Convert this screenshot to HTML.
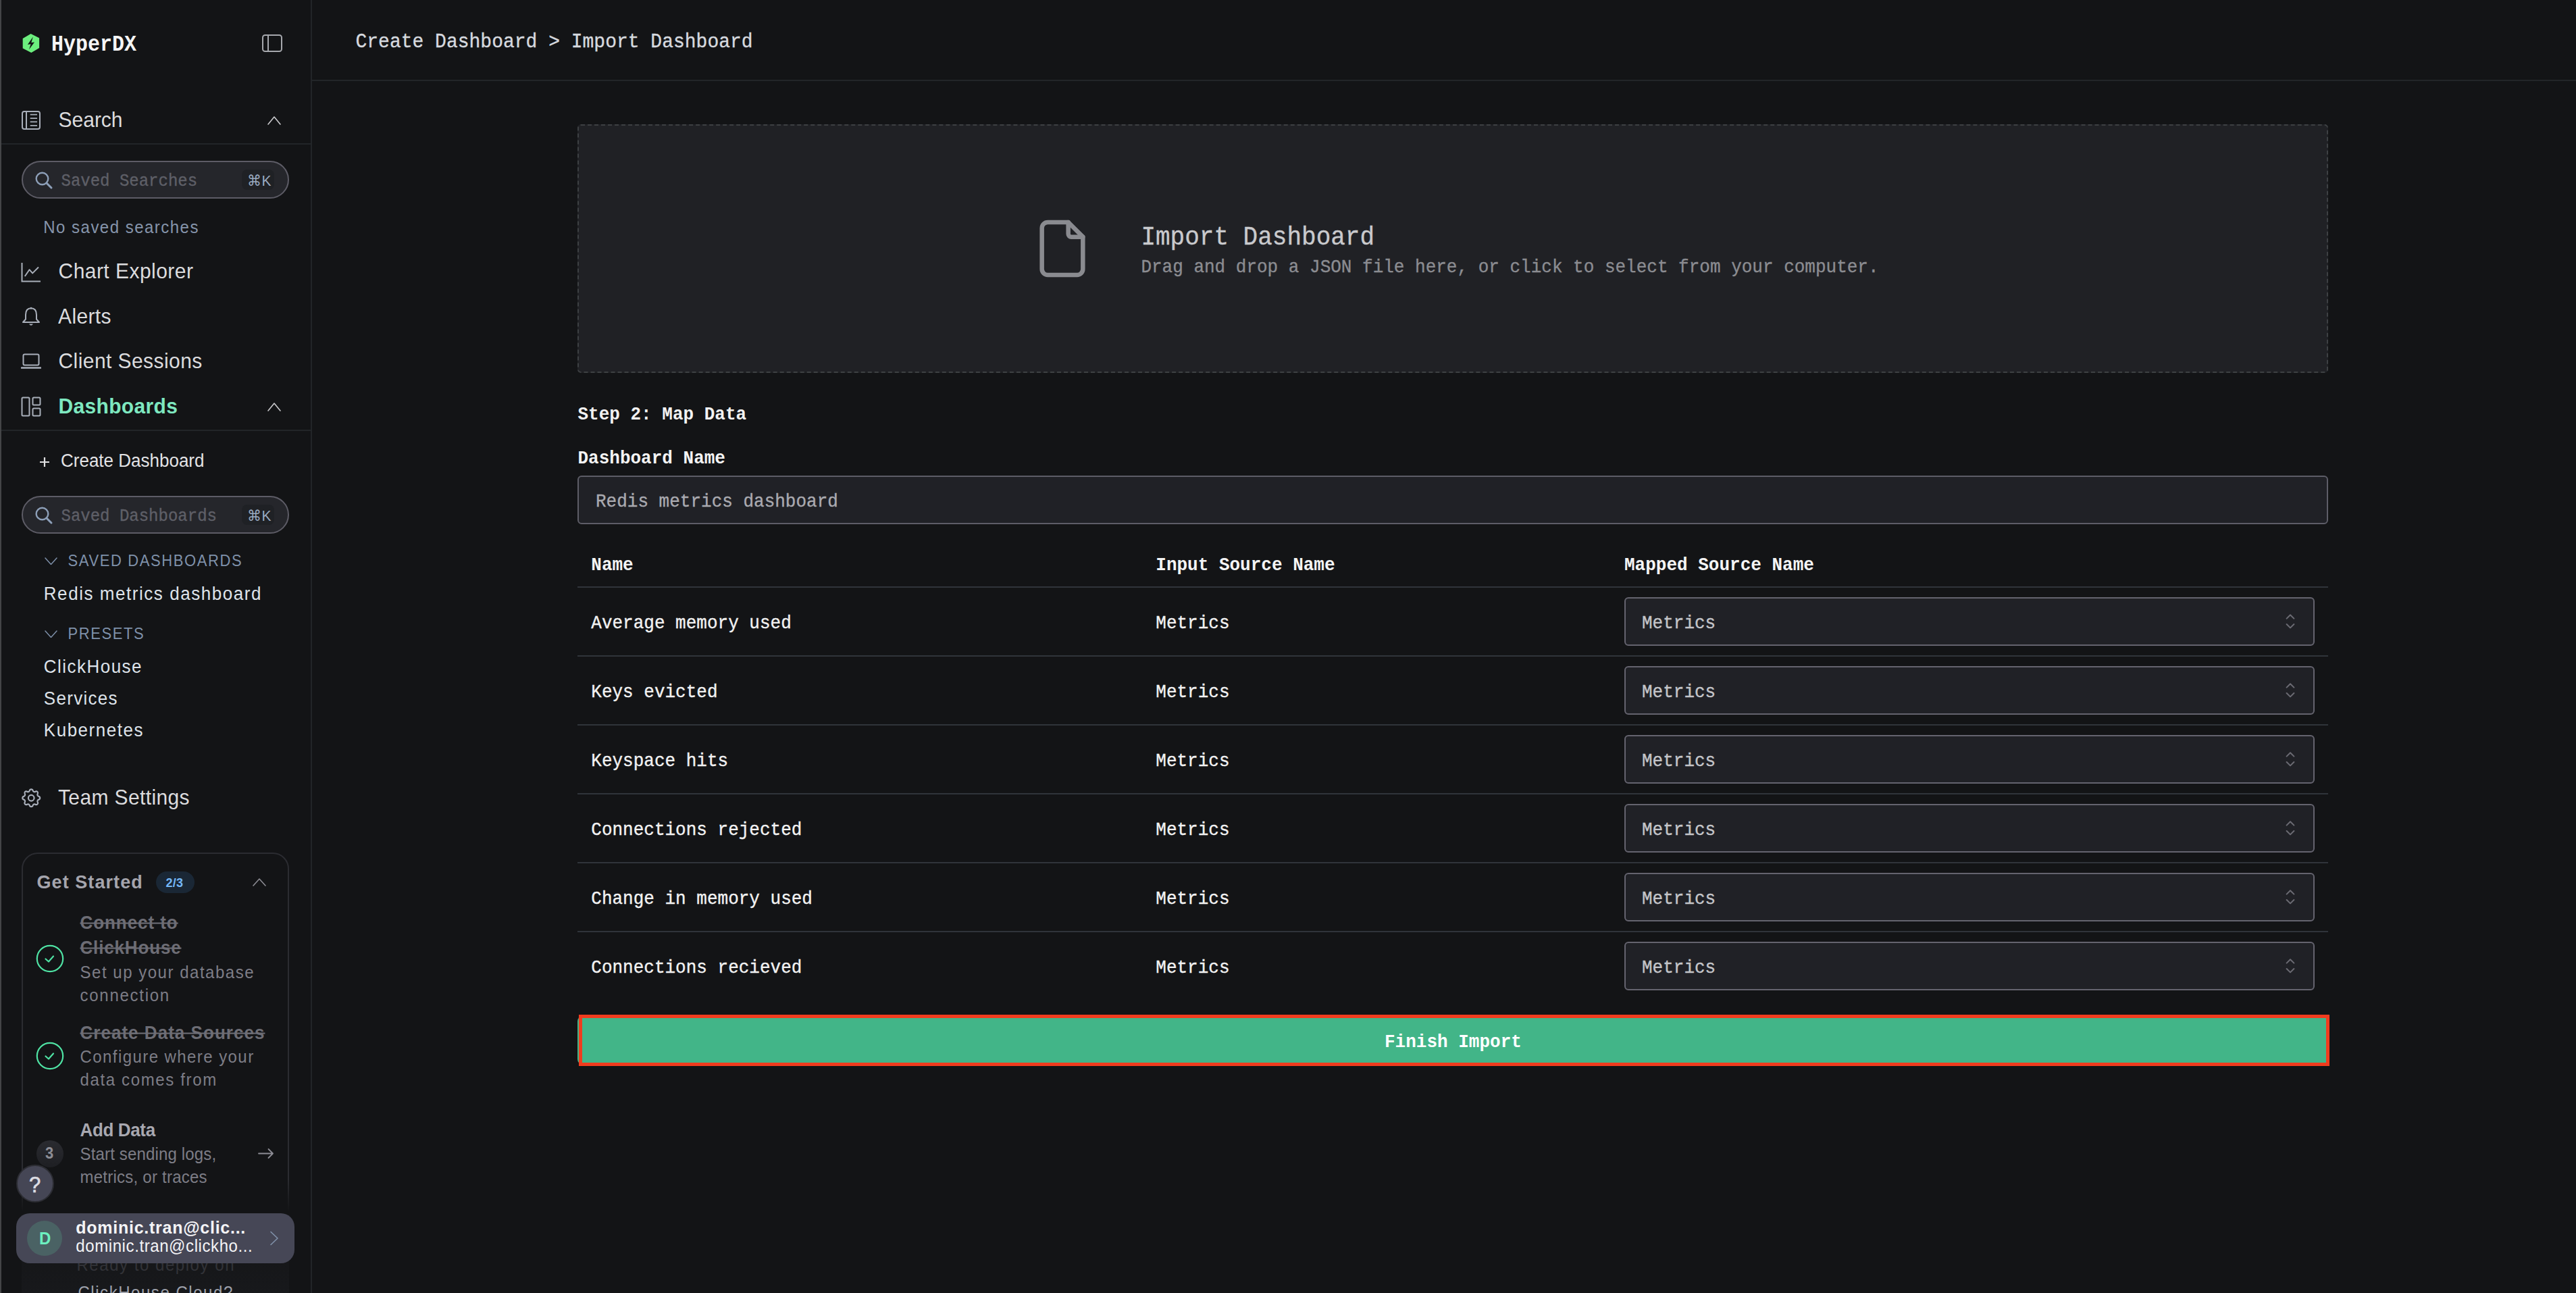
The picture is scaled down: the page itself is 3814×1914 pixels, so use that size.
<!DOCTYPE html>
<html><head><meta charset="utf-8"><style>
html,body{margin:0;padding:0;}
body{width:3814px;height:1914px;overflow:hidden;background:#131416;position:relative;}
.t{position:absolute;white-space:nowrap;}
.s{font-family:"Liberation Sans", sans-serif;}
.m{font-family:"Liberation Mono", monospace;}
.b{position:absolute;display:block;}
</style></head><body>
<div class="b" style="left:0px;top:0px;width:2px;height:1914px;background:#444547;"></div>
<div class="b" style="left:460px;top:0px;width:2px;height:1914px;background:#222528;"></div>
<svg class="b" style="left:32px;top:49px;" width="28" height="30" viewBox="0 0 28 30" fill="none"><path d="M13.6 0.9 L26.1 7.3 V21.9 L14.3 29.1 L1.7 22.6 V8 Z" fill="#6cee7e"/><path d="M16.9 5.4 L8.9 16.9 L13.6 16.3 L11 24.3 L19 13.5 L14.4 14.1 Z" fill="#131416"/></svg>
<div class="t m " style="left:76px;top:48.52px;font-size:30px;line-height:36px;color:#f5f5f5;font-weight:700;transform:scaleY(1.08);transform-origin:0 25.98px;">HyperDX</div>
<svg class="b" style="left:388px;top:51px;" width="30" height="26" viewBox="0 0 30 26" fill="none"><rect x="1" y="1" width="28" height="24" rx="3.5" stroke="#a6a8ad" stroke-width="2"/><line x1="9" y1="1.5" x2="9" y2="24.5" stroke="#a6a8ad" stroke-width="2"/></svg>
<svg class="b" style="left:32px;top:164px;" width="28" height="28" viewBox="0 0 28 28" fill="none"><rect x="1" y="1" width="26" height="26" rx="3" stroke="#a9afba" stroke-width="2"/><line x1="7" y1="1.5" x2="7" y2="26.5" stroke="#a9afba" stroke-width="2"/><path d="M12.7 5.6 H23 M12.7 11.1 H23 M12.7 16.4 H23 M12.7 21.8 H23" stroke="#a9afba" stroke-width="1.8"/></svg>
<div class="t s " style="left:86.5px;top:159.60px;font-size:30px;line-height:36px;color:#dcdcde;font-weight:400;transform:scaleY(1.05);transform-origin:0 28.40px;">Search</div>
<svg class="b" style="left:396px;top:171.5px;" width="20" height="13" viewBox="0 0 20 13" fill="none"><path d="M1 12 L10.0 1 L19 12" stroke="#c9c9cc" stroke-width="1.6" stroke-linecap="round" stroke-linejoin="round"/></svg>
<div class="b" style="left:2px;top:212px;width:458px;height:2px;background:#222528;"></div>
<div class="b" style="left:32px;top:238px;width:396px;height:56px;background:#25262b;border:2px solid #5d5c66;border-radius:28px;box-sizing:border-box;"></div>
<svg class="b" style="left:50px;top:252px;" width="30" height="30" viewBox="0 0 30 30" fill="none"><circle cx="12.5" cy="12.5" r="8.8" stroke="#8d9fb8" stroke-width="2.4"/><path d="M19 19 L26 26" stroke="#8d9fb8" stroke-width="3" stroke-linecap="round"/></svg>
<div class="t m " style="left:90.5px;top:254.11px;font-size:24px;line-height:29px;color:#5e5f67;font-weight:400;transform:scaleY(1.08);transform-origin:0 20.89px;-webkit-text-stroke:0.35px #5e5f67;">Saved Searches</div>
<div class="b" style="left:358px;top:251px;width:48px;height:30px;background:#1f2125;border-radius:8px;"></div>
<div class="t s " style="left:366px;top:254.62px;font-size:21px;line-height:25px;color:#9aaac0;font-weight:400;transform:scaleY(1.05);transform-origin:0 19.78px;letter-spacing:0.6px;">&#8984;K</div>
<div class="t s " style="left:64.3px;top:321.98px;font-size:24px;line-height:29px;color:#8695ab;font-weight:400;transform:scaleY(1.05);transform-origin:0 22.82px;letter-spacing:1.48px;">No saved searches</div>
<svg class="b" style="left:31px;top:388px;" width="30" height="30" viewBox="0 0 30 30" fill="none"><path d="M1.5 1 V28.5 H29" stroke="#a9afba" stroke-width="2"/><path d="M5.8 21 L12.5 11.2 L17.2 16.4 L26 7.5" stroke="#a9afba" stroke-width="2" stroke-linejoin="round"/></svg>
<div class="t s " style="left:86.5px;top:384.41px;font-size:30px;line-height:36px;color:#dcdcde;font-weight:400;transform:scaleY(1.05);transform-origin:0 28.40px;letter-spacing:0.46px;">Chart Explorer</div>
<svg class="b" style="left:32px;top:454px;" width="28" height="30" viewBox="0 0 28 30" fill="none"><path d="M14 2.2 C8 2.2 6 7 6 12 V18.5 L2 23 H26 L22 18.5 V12 C22 7 20 2.2 14 2.2 Z" stroke="#a9afba" stroke-width="2" stroke-linejoin="round"/><path d="M11 25.5 Q14 30 17 25.5 Z" fill="#a9afba"/><circle cx="14" cy="2.2" r="1.4" fill="#a9afba"/></svg>
<div class="t s " style="left:86px;top:450.61px;font-size:30px;line-height:36px;color:#dcdcde;font-weight:400;transform:scaleY(1.05);transform-origin:0 28.40px;letter-spacing:0.38px;">Alerts</div>
<svg class="b" style="left:31px;top:523px;" width="30" height="24" viewBox="0 0 30 24" fill="none"><rect x="3.5" y="1.5" width="23" height="16" rx="2" stroke="#a9afba" stroke-width="2"/><path d="M1 21.5 H29" stroke="#a9afba" stroke-width="2.6" stroke-linecap="round"/></svg>
<div class="t s " style="left:86.5px;top:516.90px;font-size:30px;line-height:36px;color:#dcdcde;font-weight:400;transform:scaleY(1.05);transform-origin:0 28.40px;letter-spacing:0.43px;">Client Sessions</div>
<svg class="b" style="left:31px;top:587px;" width="30" height="30" viewBox="0 0 30 30" fill="none"><rect x="1.5" y="1.5" width="11" height="27" rx="1.5" stroke="#a9afba" stroke-width="2"/><rect x="17.5" y="1.5" width="11" height="11" rx="1.5" stroke="#a9afba" stroke-width="2"/><rect x="17.5" y="17.5" width="11" height="11" rx="1.5" stroke="#a9afba" stroke-width="2"/></svg>
<div class="t s " style="left:86.5px;top:584.00px;font-size:30px;line-height:36px;color:#7ee8c0;font-weight:700;transform:scaleY(1.05);transform-origin:0 28.40px;letter-spacing:0.33px;">Dashboards</div>
<svg class="b" style="left:396px;top:596px;" width="20" height="13" viewBox="0 0 20 13" fill="none"><path d="M1 12 L10.0 1 L19 12" stroke="#c9c9cc" stroke-width="1.6" stroke-linecap="round" stroke-linejoin="round"/></svg>
<div class="b" style="left:2px;top:636px;width:458px;height:2px;background:#222528;"></div>
<svg class="b" style="left:58px;top:676px;" width="16" height="16" viewBox="0 0 16 16" fill="none"><path d="M8 1 V15 M1 8 H15" stroke="#e0e0e2" stroke-width="2.2"/></svg>
<div class="t s " style="left:90px;top:666.79px;font-size:26px;line-height:31px;color:#e2e2e4;font-weight:400;transform:scaleY(1.05);transform-origin:0 24.51px;">Create Dashboard</div>
<div class="b" style="left:32px;top:734px;width:396px;height:56px;background:#25262b;border:2px solid #5d5c66;border-radius:28px;box-sizing:border-box;"></div>
<svg class="b" style="left:50px;top:748px;" width="30" height="30" viewBox="0 0 30 30" fill="none"><circle cx="12.5" cy="12.5" r="8.8" stroke="#8d9fb8" stroke-width="2.4"/><path d="M19 19 L26 26" stroke="#8d9fb8" stroke-width="3" stroke-linecap="round"/></svg>
<div class="t m " style="left:90.5px;top:750.11px;font-size:24px;line-height:29px;color:#5e5f67;font-weight:400;transform:scaleY(1.08);transform-origin:0 20.89px;-webkit-text-stroke:0.35px #5e5f67;">Saved Dashboards</div>
<div class="b" style="left:358px;top:747px;width:48px;height:30px;background:#1f2125;border-radius:8px;"></div>
<div class="t s " style="left:366px;top:750.62px;font-size:21px;line-height:25px;color:#9aaac0;font-weight:400;transform:scaleY(1.05);transform-origin:0 19.78px;letter-spacing:0.6px;">&#8984;K</div>
<svg class="b" style="left:65.5px;top:824.5px;" width="19" height="11.5" viewBox="0 0 19 11.5" fill="none"><path d="M1 1 L9.5 10.5 L18 1" stroke="#7d8fa8" stroke-width="1.5" stroke-linecap="round" stroke-linejoin="round"/></svg>
<div class="t s " style="left:100.5px;top:818.38px;font-size:22px;line-height:26px;color:#7f91aa;font-weight:400;transform:scaleY(1.05);transform-origin:0 20.62px;letter-spacing:1.6px;">SAVED DASHBOARDS</div>
<div class="t s " style="left:64.8px;top:863.69px;font-size:26px;line-height:31px;color:#dee3ea;font-weight:400;transform:scaleY(1.05);transform-origin:0 24.51px;letter-spacing:1.55px;">Redis metrics dashboard</div>
<svg class="b" style="left:65.5px;top:932.5px;" width="19" height="11.5" viewBox="0 0 19 11.5" fill="none"><path d="M1 1 L9.5 10.5 L18 1" stroke="#7d8fa8" stroke-width="1.5" stroke-linecap="round" stroke-linejoin="round"/></svg>
<div class="t s " style="left:100.5px;top:926.38px;font-size:22px;line-height:26px;color:#7f91aa;font-weight:400;transform:scaleY(1.05);transform-origin:0 20.62px;letter-spacing:1.6px;">PRESETS</div>
<div class="t s " style="left:64.8px;top:972.19px;font-size:26px;line-height:31px;color:#dee3ea;font-weight:400;transform:scaleY(1.05);transform-origin:0 24.51px;letter-spacing:1.47px;">ClickHouse</div>
<div class="t s " style="left:64.8px;top:1019.29px;font-size:26px;line-height:31px;color:#dee3ea;font-weight:400;transform:scaleY(1.05);transform-origin:0 24.51px;letter-spacing:1.3px;">Services</div>
<div class="t s " style="left:64.8px;top:1066.29px;font-size:26px;line-height:31px;color:#dee3ea;font-weight:400;transform:scaleY(1.05);transform-origin:0 24.51px;letter-spacing:1.52px;">Kubernetes</div>
<svg class="b" style="left:28.8px;top:1163.5px;stroke:#a9afba;stroke-width:1.5;stroke-linecap:round;stroke-linejoin:round;" width="34.5" height="34.5" viewBox="0 0 24 24" fill="none"><path d="M10.325 4.317c.426 -1.756 2.924 -1.756 3.35 0a1.724 1.724 0 0 0 2.573 1.066c1.543 -.94 3.31 .826 2.37 2.37a1.724 1.724 0 0 0 1.065 2.572c1.756 .426 1.756 2.924 0 3.35a1.724 1.724 0 0 0 -1.066 2.573c.94 1.543 -.826 3.31 -2.37 2.37a1.724 1.724 0 0 0 -2.572 1.065c-.426 1.756 -2.924 1.756 -3.35 0a1.724 1.724 0 0 0 -2.573 -1.066c-1.543 .94 -3.31 -.826 -2.37 -2.37a1.724 1.724 0 0 0 -1.065 -2.572c-1.756 -.426 -1.756 -2.924 0 -3.35a1.724 1.724 0 0 0 1.066 -2.573c-.94 -1.543 .826 -3.31 2.37 -2.37c1 .608 2.296 .07 2.572 -1.065z"/><circle cx="12" cy="12" r="3"/></svg>
<div class="t s " style="left:86px;top:1162.90px;font-size:30px;line-height:36px;color:#dcdcde;font-weight:400;transform:scaleY(1.05);transform-origin:0 28.40px;letter-spacing:0.37px;">Team Settings</div>
<div class="b" style="left:32px;top:1262px;width:396px;height:700px;border:2px solid #2b2c31;border-radius:24px;box-sizing:border-box;background:#131416;"></div>
<div class="b" style="left:28px;top:1745px;width:10px;height:60px;background:linear-gradient(rgba(19,20,22,0),#131416 80%);"></div>
<div class="b" style="left:422px;top:1745px;width:10px;height:60px;background:linear-gradient(rgba(19,20,22,0),#131416 80%);"></div>
<div class="b" style="left:32px;top:1805px;width:396px;height:120px;background:linear-gradient(#131416,#18191c);"></div>
<div class="t s " style="left:54.5px;top:1289.84px;font-size:27px;line-height:32px;color:#a5a5ad;font-weight:700;transform:scaleY(1.05);transform-origin:0 25.36px;letter-spacing:1.07px;">Get Started</div>
<div class="b" style="left:231px;top:1290px;width:57px;height:32px;background:#1a2735;border-radius:16px;"></div>
<div class="t s " style="left:245.5px;top:1295.56px;font-size:18px;line-height:22px;color:#74b8f8;font-weight:700;transform:scaleY(1.05);transform-origin:0 17.24px;letter-spacing:0.3px;">2/3</div>
<svg class="b" style="left:374px;top:1300px;" width="20" height="12" viewBox="0 0 20 12" fill="none"><path d="M1 11 L10.0 1 L19 11" stroke="#8c8c94" stroke-width="1.6" stroke-linecap="round" stroke-linejoin="round"/></svg>
<svg class="b" style="left:53px;top:1398px;" width="42" height="42" viewBox="0 0 42 42" fill="none"><circle cx="21" cy="21" r="19.2" stroke="#4fe3a4" stroke-width="2.2"/><path d="M14.5 21.5 L19 25.5 L26 17.5" stroke="#4fe3a4" stroke-width="2.2" stroke-linecap="round" stroke-linejoin="round"/></svg>
<div class="t s " style="left:118.5px;top:1350.99px;font-size:26px;line-height:31px;color:#6d6d75;font-weight:700;transform:scaleY(1.05);transform-origin:0 24.51px;letter-spacing:0.94px;text-decoration:line-through;text-decoration-thickness:2px;">Connect to</div>
<div class="t s " style="left:118.5px;top:1388.49px;font-size:26px;line-height:31px;color:#6d6d75;font-weight:700;transform:scaleY(1.05);transform-origin:0 24.51px;letter-spacing:0.84px;text-decoration:line-through;text-decoration-thickness:2px;">ClickHouse</div>
<div class="t s " style="left:118.5px;top:1424.98px;font-size:24px;line-height:29px;color:#7d7d86;font-weight:400;transform:scaleY(1.05);transform-origin:0 22.82px;letter-spacing:1.52px;">Set up your database</div>
<div class="t s " style="left:118.5px;top:1458.88px;font-size:24px;line-height:29px;color:#7d7d86;font-weight:400;transform:scaleY(1.05);transform-origin:0 22.82px;letter-spacing:1.73px;">connection</div>
<svg class="b" style="left:53px;top:1542px;" width="42" height="42" viewBox="0 0 42 42" fill="none"><circle cx="21" cy="21" r="19.2" stroke="#4fe3a4" stroke-width="2.2"/><path d="M14.5 21.5 L19 25.5 L26 17.5" stroke="#4fe3a4" stroke-width="2.2" stroke-linecap="round" stroke-linejoin="round"/></svg>
<div class="t s " style="left:118.5px;top:1514.49px;font-size:26px;line-height:31px;color:#6d6d75;font-weight:700;transform:scaleY(1.05);transform-origin:0 24.51px;letter-spacing:1.03px;text-decoration:line-through;text-decoration-thickness:2px;">Create Data Sources</div>
<div class="t s " style="left:118.5px;top:1549.88px;font-size:24px;line-height:29px;color:#7d7d86;font-weight:400;transform:scaleY(1.05);transform-origin:0 22.82px;letter-spacing:1.43px;">Configure where your</div>
<div class="t s " style="left:118.5px;top:1583.78px;font-size:24px;line-height:29px;color:#7d7d86;font-weight:400;transform:scaleY(1.05);transform-origin:0 22.82px;letter-spacing:1.64px;">data comes from</div>
<div class="t s " style="left:118.5px;top:1658.49px;font-size:26px;line-height:31px;color:#a8a8b0;font-weight:700;transform:scaleY(1.05);transform-origin:0 24.51px;letter-spacing:-0.36px;">Add Data</div>
<div class="b" style="left:54px;top:1688px;width:40px;height:40px;background:linear-gradient(#2a2b30,#1e1f23);border-radius:20px;"></div>
<div class="t s " style="left:67px;top:1695.38px;font-size:22px;line-height:26px;color:#8d8d95;font-weight:700;transform:scaleY(1.05);transform-origin:0 20.62px;">3</div>
<div class="t s " style="left:118.5px;top:1694.18px;font-size:24px;line-height:29px;color:#7d7d86;font-weight:400;transform:scaleY(1.05);transform-origin:0 22.82px;letter-spacing:0.16px;">Start sending logs,</div>
<div class="t s " style="left:118.5px;top:1728.48px;font-size:24px;line-height:29px;color:#7d7d86;font-weight:400;transform:scaleY(1.05);transform-origin:0 22.82px;letter-spacing:0.24px;">metrics, or traces</div>
<svg class="b" style="left:382px;top:1699px;" width="24" height="17" viewBox="0 0 24 17" fill="none"><path d="M1 8.5 H22 M15.5 2 L22 8.5 L15.5 15" stroke="#8d8d95" stroke-width="1.8" stroke-linecap="round" stroke-linejoin="round"/></svg>
<div class="t s " style="left:113.5px;top:1858.18px;font-size:24px;line-height:29px;color:#323338;font-weight:400;transform:scaleY(1.05);transform-origin:0 22.82px;letter-spacing:1.54px;">Ready to deploy on</div>
<div class="t s " style="left:115.5px;top:1899.18px;font-size:24px;line-height:29px;color:#9ea1ab;font-weight:400;transform:scaleY(1.05);transform-origin:0 22.82px;letter-spacing:1.54px;">ClickHouse Cloud?</div>
<div class="b" style="left:24px;top:1724px;width:56px;height:56px;background:#454655;border:2px solid #2c2d33;border-radius:50%;box-sizing:border-box;"></div>
<div class="t s " style="left:43px;top:1735.76px;font-size:31px;line-height:37px;color:#dcdce2;font-weight:400;transform:scaleY(1.05);transform-origin:0 29.24px;-webkit-text-stroke:0.7px #dcdce2;">?</div>
<div class="b" style="left:24px;top:1796px;width:412px;height:74px;background:#464756;border-radius:20px;"></div>
<div class="b" style="left:40px;top:1807px;width:52px;height:52px;background:#4a6264;border-radius:50%;"></div>
<div class="t s " style="left:58px;top:1819.18px;font-size:24px;line-height:29px;color:#6cf0c0;font-weight:700;transform:scaleY(1.05);transform-origin:0 22.82px;">D</div>
<div class="t s " style="left:112.3px;top:1802.34px;font-size:25px;line-height:30px;color:#f4f4f6;font-weight:700;transform:scaleY(1.05);transform-origin:0 23.66px;letter-spacing:0.74px;">dominic.tran@clic...</div>
<div class="t s " style="left:112.3px;top:1830.18px;font-size:24px;line-height:29px;color:#f4f4f6;font-weight:400;transform:scaleY(1.05);transform-origin:0 22.82px;letter-spacing:0.59px;">dominic.tran@clickho...</div>
<svg class="b" style="left:399px;top:1822px;" width="14" height="22" viewBox="0 0 14 22" fill="none"><path d="M2 1.5 L12 11 L2 20.5" stroke="#8192aa" stroke-width="1.6" stroke-linecap="round" stroke-linejoin="round"/></svg>
<div class="b" style="left:462px;top:118px;width:3352px;height:2px;background:#222528;"></div>
<div class="t m " style="left:526.5px;top:45.55px;font-size:28px;line-height:34px;color:#d6d9df;font-weight:400;transform:scaleY(1.08);transform-origin:0 24.45px;-webkit-text-stroke:0.35px #d6d9df;">Create Dashboard &gt; Import Dashboard</div>
<div class="b" style="left:855px;top:184px;width:2592px;height:368px;background:#202125;border:2px dashed #3d4043;border-radius:5px;box-sizing:border-box;"></div>
<svg class="b" style="left:1521px;top:316px;stroke:#8a8b90;stroke-width:1.5;stroke-linecap:round;stroke-linejoin:round;" width="104" height="104" viewBox="0 0 24 24" fill="none"><path d="M14 3v4a1 1 0 0 0 1 1h4" /><path d="M17 21h-10a2 2 0 0 1 -2 -2v-14a2 2 0 0 1 2 -2h7l5 5v11a2 2 0 0 1 -2 2z" /></svg>
<div class="t m " style="left:1689.4px;top:330.92px;font-size:36px;line-height:43px;color:#c9cacd;font-weight:400;transform:scaleY(1.08);transform-origin:0 31.08px;-webkit-text-stroke:0.35px #c9cacd;">Import Dashboard</div>
<div class="t m " style="left:1689.4px;top:381.38px;font-size:26px;line-height:31px;color:#8b8c91;font-weight:400;transform:scaleY(1.08);transform-origin:0 22.42px;-webkit-text-stroke:0.35px #8b8c91;">Drag and drop a JSON file here, or click to select from your computer.</div>
<div class="t m " style="left:855.5px;top:598.58px;font-size:26px;line-height:31px;color:#f2f2f2;font-weight:700;transform:scaleY(1.08);transform-origin:0 22.42px;">Step 2: Map Data</div>
<div class="t m " style="left:855.5px;top:664.08px;font-size:26px;line-height:31px;color:#f4f4f4;font-weight:700;transform:scaleY(1.08);transform-origin:0 22.42px;">Dashboard Name</div>
<div class="b" style="left:855px;top:704px;width:2592px;height:72px;background:#202126;border:2px solid #5d5d67;border-radius:6px;box-sizing:border-box;"></div>
<div class="t m " style="left:882px;top:727.58px;font-size:26px;line-height:31px;color:#aaaab0;font-weight:400;transform:scaleY(1.08);transform-origin:0 22.42px;-webkit-text-stroke:0.35px #aaaab0;">Redis metrics dashboard</div>
<div class="t m " style="left:875.3px;top:821.58px;font-size:26px;line-height:31px;color:#f4f4f4;font-weight:700;transform:scaleY(1.08);transform-origin:0 22.42px;">Name</div>
<div class="t m " style="left:1711.3px;top:821.58px;font-size:26px;line-height:31px;color:#f4f4f4;font-weight:700;transform:scaleY(1.08);transform-origin:0 22.42px;">Input Source Name</div>
<div class="t m " style="left:2405px;top:821.58px;font-size:26px;line-height:31px;color:#f4f4f4;font-weight:700;transform:scaleY(1.08);transform-origin:0 22.42px;">Mapped Source Name</div>
<div class="b" style="left:855px;top:868px;width:2592px;height:2px;background:#30343a;"></div>
<div class="t m " style="left:875.3px;top:907.58px;font-size:26px;line-height:31px;color:#f2f2f2;font-weight:400;transform:scaleY(1.08);transform-origin:0 22.42px;-webkit-text-stroke:0.35px #f2f2f2;">Average memory used</div>
<div class="t m " style="left:1711.3px;top:907.58px;font-size:26px;line-height:31px;color:#f2f2f2;font-weight:400;transform:scaleY(1.08);transform-origin:0 22.42px;-webkit-text-stroke:0.35px #f2f2f2;">Metrics</div>
<div class="b" style="left:2405px;top:884px;width:1022px;height:72px;background:#202126;border:2px solid #64636e;border-radius:6px;box-sizing:border-box;"></div>
<div class="t m " style="left:2431px;top:907.58px;font-size:26px;line-height:31px;color:#c4c5c9;font-weight:400;transform:scaleY(1.08);transform-origin:0 22.42px;-webkit-text-stroke:0.35px #c4c5c9;">Metrics</div>
<svg class="b" style="left:3382px;top:907px;" width="18" height="26" viewBox="0 0 18 26" fill="none"><path d="M3.6 8.6 L9 3.2 L14.4 8.6 M3.6 17 L9 22.4 L14.4 17" stroke="#6b6b73" stroke-width="2" stroke-linecap="round" stroke-linejoin="round"/></svg>
<div class="b" style="left:855px;top:970px;width:2592px;height:2px;background:#30343a;"></div>
<div class="t m " style="left:875.3px;top:1009.58px;font-size:26px;line-height:31px;color:#f2f2f2;font-weight:400;transform:scaleY(1.08);transform-origin:0 22.42px;-webkit-text-stroke:0.35px #f2f2f2;">Keys evicted</div>
<div class="t m " style="left:1711.3px;top:1009.58px;font-size:26px;line-height:31px;color:#f2f2f2;font-weight:400;transform:scaleY(1.08);transform-origin:0 22.42px;-webkit-text-stroke:0.35px #f2f2f2;">Metrics</div>
<div class="b" style="left:2405px;top:986px;width:1022px;height:72px;background:#202126;border:2px solid #64636e;border-radius:6px;box-sizing:border-box;"></div>
<div class="t m " style="left:2431px;top:1009.58px;font-size:26px;line-height:31px;color:#c4c5c9;font-weight:400;transform:scaleY(1.08);transform-origin:0 22.42px;-webkit-text-stroke:0.35px #c4c5c9;">Metrics</div>
<svg class="b" style="left:3382px;top:1009px;" width="18" height="26" viewBox="0 0 18 26" fill="none"><path d="M3.6 8.6 L9 3.2 L14.4 8.6 M3.6 17 L9 22.4 L14.4 17" stroke="#6b6b73" stroke-width="2" stroke-linecap="round" stroke-linejoin="round"/></svg>
<div class="b" style="left:855px;top:1072px;width:2592px;height:2px;background:#30343a;"></div>
<div class="t m " style="left:875.3px;top:1111.58px;font-size:26px;line-height:31px;color:#f2f2f2;font-weight:400;transform:scaleY(1.08);transform-origin:0 22.42px;-webkit-text-stroke:0.35px #f2f2f2;">Keyspace hits</div>
<div class="t m " style="left:1711.3px;top:1111.58px;font-size:26px;line-height:31px;color:#f2f2f2;font-weight:400;transform:scaleY(1.08);transform-origin:0 22.42px;-webkit-text-stroke:0.35px #f2f2f2;">Metrics</div>
<div class="b" style="left:2405px;top:1088px;width:1022px;height:72px;background:#202126;border:2px solid #64636e;border-radius:6px;box-sizing:border-box;"></div>
<div class="t m " style="left:2431px;top:1111.58px;font-size:26px;line-height:31px;color:#c4c5c9;font-weight:400;transform:scaleY(1.08);transform-origin:0 22.42px;-webkit-text-stroke:0.35px #c4c5c9;">Metrics</div>
<svg class="b" style="left:3382px;top:1111px;" width="18" height="26" viewBox="0 0 18 26" fill="none"><path d="M3.6 8.6 L9 3.2 L14.4 8.6 M3.6 17 L9 22.4 L14.4 17" stroke="#6b6b73" stroke-width="2" stroke-linecap="round" stroke-linejoin="round"/></svg>
<div class="b" style="left:855px;top:1174px;width:2592px;height:2px;background:#30343a;"></div>
<div class="t m " style="left:875.3px;top:1213.58px;font-size:26px;line-height:31px;color:#f2f2f2;font-weight:400;transform:scaleY(1.08);transform-origin:0 22.42px;-webkit-text-stroke:0.35px #f2f2f2;">Connections rejected</div>
<div class="t m " style="left:1711.3px;top:1213.58px;font-size:26px;line-height:31px;color:#f2f2f2;font-weight:400;transform:scaleY(1.08);transform-origin:0 22.42px;-webkit-text-stroke:0.35px #f2f2f2;">Metrics</div>
<div class="b" style="left:2405px;top:1190px;width:1022px;height:72px;background:#202126;border:2px solid #64636e;border-radius:6px;box-sizing:border-box;"></div>
<div class="t m " style="left:2431px;top:1213.58px;font-size:26px;line-height:31px;color:#c4c5c9;font-weight:400;transform:scaleY(1.08);transform-origin:0 22.42px;-webkit-text-stroke:0.35px #c4c5c9;">Metrics</div>
<svg class="b" style="left:3382px;top:1213px;" width="18" height="26" viewBox="0 0 18 26" fill="none"><path d="M3.6 8.6 L9 3.2 L14.4 8.6 M3.6 17 L9 22.4 L14.4 17" stroke="#6b6b73" stroke-width="2" stroke-linecap="round" stroke-linejoin="round"/></svg>
<div class="b" style="left:855px;top:1276px;width:2592px;height:2px;background:#30343a;"></div>
<div class="t m " style="left:875.3px;top:1315.58px;font-size:26px;line-height:31px;color:#f2f2f2;font-weight:400;transform:scaleY(1.08);transform-origin:0 22.42px;-webkit-text-stroke:0.35px #f2f2f2;">Change in memory used</div>
<div class="t m " style="left:1711.3px;top:1315.58px;font-size:26px;line-height:31px;color:#f2f2f2;font-weight:400;transform:scaleY(1.08);transform-origin:0 22.42px;-webkit-text-stroke:0.35px #f2f2f2;">Metrics</div>
<div class="b" style="left:2405px;top:1292px;width:1022px;height:72px;background:#202126;border:2px solid #64636e;border-radius:6px;box-sizing:border-box;"></div>
<div class="t m " style="left:2431px;top:1315.58px;font-size:26px;line-height:31px;color:#c4c5c9;font-weight:400;transform:scaleY(1.08);transform-origin:0 22.42px;-webkit-text-stroke:0.35px #c4c5c9;">Metrics</div>
<svg class="b" style="left:3382px;top:1315px;" width="18" height="26" viewBox="0 0 18 26" fill="none"><path d="M3.6 8.6 L9 3.2 L14.4 8.6 M3.6 17 L9 22.4 L14.4 17" stroke="#6b6b73" stroke-width="2" stroke-linecap="round" stroke-linejoin="round"/></svg>
<div class="b" style="left:855px;top:1378px;width:2592px;height:2px;background:#30343a;"></div>
<div class="t m " style="left:875.3px;top:1417.58px;font-size:26px;line-height:31px;color:#f2f2f2;font-weight:400;transform:scaleY(1.08);transform-origin:0 22.42px;-webkit-text-stroke:0.35px #f2f2f2;">Connections recieved</div>
<div class="t m " style="left:1711.3px;top:1417.58px;font-size:26px;line-height:31px;color:#f2f2f2;font-weight:400;transform:scaleY(1.08);transform-origin:0 22.42px;-webkit-text-stroke:0.35px #f2f2f2;">Metrics</div>
<div class="b" style="left:2405px;top:1394px;width:1022px;height:72px;background:#202126;border:2px solid #64636e;border-radius:6px;box-sizing:border-box;"></div>
<div class="t m " style="left:2431px;top:1417.58px;font-size:26px;line-height:31px;color:#c4c5c9;font-weight:400;transform:scaleY(1.08);transform-origin:0 22.42px;-webkit-text-stroke:0.35px #c4c5c9;">Metrics</div>
<svg class="b" style="left:3382px;top:1417px;" width="18" height="26" viewBox="0 0 18 26" fill="none"><path d="M3.6 8.6 L9 3.2 L14.4 8.6 M3.6 17 L9 22.4 L14.4 17" stroke="#6b6b73" stroke-width="2" stroke-linecap="round" stroke-linejoin="round"/></svg>
<div class="b" style="left:855px;top:1504px;width:2592px;height:72px;background:#42b588;border-radius:8px;"></div>
<div class="t m " style="left:2050px;top:1527.58px;font-size:26px;line-height:31px;color:#ffffff;font-weight:700;transform:scaleY(1.08);transform-origin:0 22.42px;">Finish Import</div>
<div class="b" style="left:857px;top:1502px;width:2592px;height:76px;border:5px solid #f03c1e;box-sizing:border-box;"></div>
</body></html>
